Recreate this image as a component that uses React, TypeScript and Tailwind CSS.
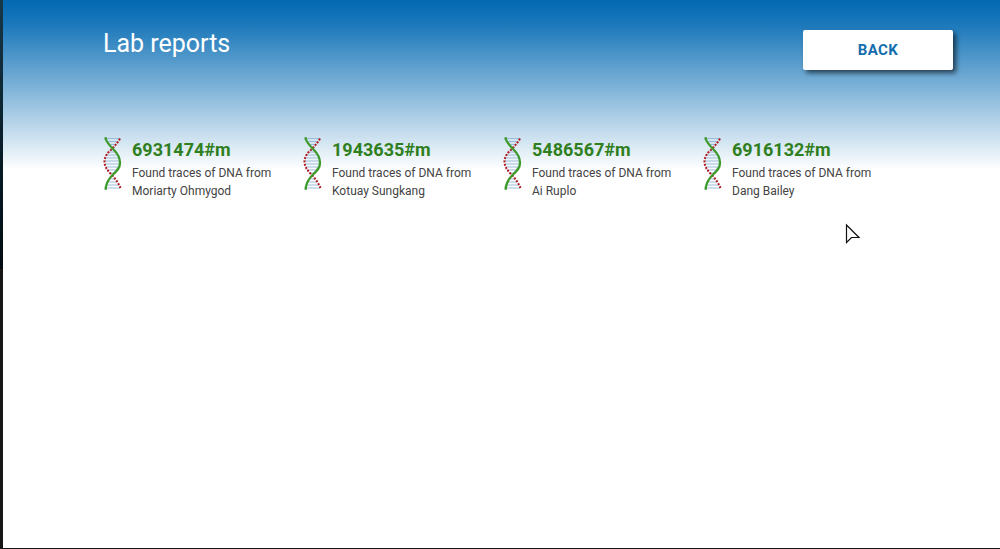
const reports = [
  { id: "6931474#m", name: "Moriarty Ohmygod" },
  { id: "1943635#m", name: "Kotuay Sungkang" },
  { id: "5486567#m", name: "Ai Ruplo" },
  { id: "6916132#m", name: "Dang Bailey" },
];

const rungs = [
  [3, 17, 1.5], [5, 15, 4.5], [7, 13, 7.5], [7, 12, 15], [4, 14, 18],
  [3, 16, 21], [2, 17, 24], [2, 17, 27], [3, 16, 30], [4, 15, 33],
  [6, 12, 36], [7, 12, 42], [5, 14, 45], [4, 16, 48], [3, 17, 51],
];

function DnaIcon() {
  return (
    <svg className="h-[53px] w-5 shrink-0" viewBox="0 0 20 53" fill="none" aria-hidden="true">
      {rungs.map(([a, b, y]) => (
        <path key={y} d={`M${a} ${y}H${b}`} stroke="#9dbbdc" strokeWidth="1" />
      ))}
      <path
        d="M17 1.5C14.5 6 12 8.5 9 12C4 16 1.5 20 1.5 25C2 31 5 34 9 38C12.5 42 15.5 46 17.5 51"
        stroke="#b02024"
        strokeWidth="2.1"
        strokeDasharray="2 1.4"
      />
      <path
        d="M1.5 1.5H4M1.5 51.5H4M2.5 1.5C4 6 7 9 11 13C15 17 17 21 17 26C17 31 14 34 9.5 38C5.5 42 3.5 46 2.5 51.5"
        stroke="#3f9a2c"
        strokeWidth="2.3"
      />
    </svg>
  );
}

export default function App() {
  return (
    <div className="flex min-h-screen bg-[#161616] pb-px font-['Roboto',sans-serif]">
      <div className="h-[49vh] w-[3px] shrink-0 self-start bg-linear-to-b from-[#173848] to-[#020b12]" />
      <div className="min-w-0 flex-1 bg-white">
        <div className="min-h-full bg-[linear-gradient(to_bottom,#0268b2_0px,#1b78ba_24px,#ffffff_170px)]">
          <header className="flex items-start justify-between pt-[30px] pr-[47px] pl-[100px]">
            <h1 className="text-[25px] leading-7 text-white">Lab reports</h1>
            <button
              type="button"
              className="h-10 w-[150px] rounded-xs bg-white text-[15px] font-bold tracking-wide text-[#146dae] shadow-[3px_3px_5px_rgba(0,0,0,0.6)]"
            >
              BACK
            </button>
          </header>
          <main className="grid grid-cols-[repeat(auto-fill,200px)] pt-[67px] pl-[100px]">
            {reports.map((report) => (
              <article key={report.id} className="flex items-start gap-[9px]">
                <DnaIcon />
                <div>
                  <h2 className="pt-px text-lg leading-6 font-bold text-[#2f7f1e]">{report.id}</h2>
                  <p className="pt-[2px] text-xs leading-[18px] text-[#444444]">
                    Found traces of DNA from
                    <br />
                    {report.name}
                  </p>
                </div>
              </article>
            ))}
          </main>
        </div>
      </div>
      <svg
        className="pointer-events-none absolute top-[223px] left-[845px] h-[22px] w-4"
        viewBox="0 0 16 22"
        aria-hidden="true"
      >
        <path d="M1.5 2V19.5L6.5 14.5H14Z" fill="#ffffff" stroke="#111111" strokeWidth="1.2" />
      </svg>
    </div>
  );
}
